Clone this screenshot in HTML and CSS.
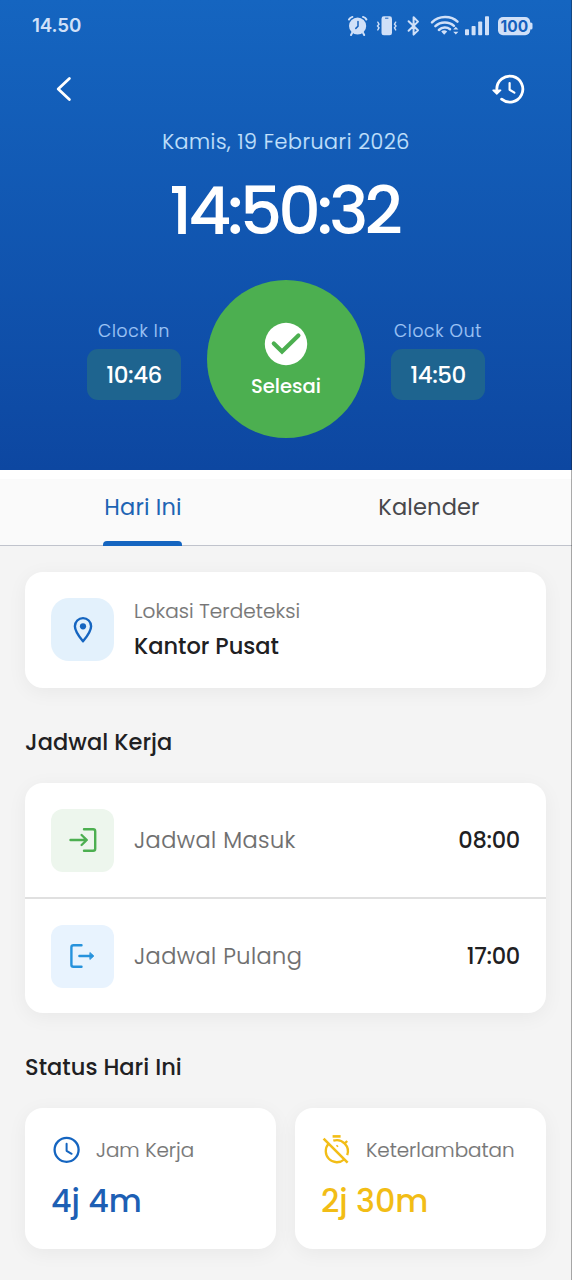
FILE: index.html
```html
<!DOCTYPE html>
<html lang="id">
<head>
<meta charset="utf-8">
<meta name="viewport" content="width=device-width, initial-scale=1">
<title>Absensi</title>
<link rel="stylesheet" href="styles.css">
</head>
<body>
<div class="screen">
  <header class="hero">
    <div class="statusbar">
      <span class="status-time">14.50</span>
      <svg class="status-icons" width="190" height="24" viewBox="0 0 190 24" fill="none" stroke="#d0e0f8" stroke-linecap="round">
        <g>
          <circle cx="12.6" cy="12" r="8.6" fill="#d0e0f8" stroke="none"/>
          <path d="M4 5.5Q5 3.6 7.4 2.9M18 2.9Q20.6 3.6 21.4 5.5M7.2 18.8L6 21M18 18.8L19.2 21" stroke-width="2"/>
          <path d="M13 7.5V12.2L10.8 14.4" stroke="#1560bd" stroke-width="1.5"/>
        </g>
        <rect x="36.5" y="2.3" width="10.5" height="19" rx="2.4" fill="#d0e0f8" stroke="none"/>
        <path d="M40.5 4.2h2.5" stroke="#1560bd" stroke-width="1"/>
        <path d="M32.8 8.2l1.2 1.9-1.5 1.9 1.5 1.9-1.2 2M50.7 8.2l-1.2 1.9L51 12l-1.5 1.9 1.2 2" stroke-width="1.4"/>
        <path d="M63.6 7.2L73 16.3L68.6 20.6V3.3L73 7.6L63.6 16.8" stroke-width="2" stroke-linejoin="round"/>
        <path d="M87 8.3C94 1.3 106 1.3 112.5 7.7M90.4 12.2C95.5 7.3 104 7.3 108.9 11.9M93.9 16C97.2 12.8 102 12.8 105 15.2" stroke-width="2.5"/>
        <path d="M96.2 17.6Q99.2 14.8 102.2 17.6L99.2 20.8Z" fill="#d0e0f8" stroke="none"/>
        <path d="M108.2 15.4L110.8 12.8L113.4 15.4ZM108.2 17.8H113.4L110.8 20.6Z" fill="#d0e0f8" stroke="none"/>
        <g fill="#d0e0f8" stroke="none">
          <rect x="120" y="15.3" width="4" height="6" rx=".8"/>
          <rect x="126.6" y="12" width="4" height="9.3" rx=".8"/>
          <rect x="133.2" y="7.4" width="4" height="13.9" rx=".8"/>
          <rect x="140" y="2.3" width="4" height="19" rx=".8"/>
          <rect x="153" y="3" width="32.2" height="18.2" rx="5"/>
          <rect x="184" y="8.5" width="3.5" height="7" rx="1.6"/>
          <text class="battery-text" x="169.3" y="17.7" text-anchor="middle">100</text>
        </g>
      </svg>
    </div>
    <nav class="topbar">
      <svg width="32" height="32" viewBox="0 0 32 32" fill="none" stroke="#fff" stroke-width="2.8" stroke-linecap="round" stroke-linejoin="round"><path d="M21.4 5.4L10.2 16L21.4 26.6"/></svg>
      <svg width="36" height="32" viewBox="0 0 36 32" fill="none" stroke="#fff" stroke-width="2.8" stroke-linecap="round" stroke-linejoin="round"><path d="M7.8 16A13 13 0 1 1 12.6 26.2"/><path d="M20.6 10V16.7L25.4 19.6" stroke-width="2.2"/><path d="M4 17.2H11.7L7.8 21Z" fill="#fff" stroke-width="1.4"/></svg>
    </nav>
    <div class="date">Kamis, 19 Februari 2026</div>
    <div class="clock">14:50:32</div>
    <div class="punch">
      <div class="punch-side">
        <span class="punch-label">Clock In</span>
        <span class="punch-time">10:46</span>
      </div>
      <div class="done">
        <svg width="44" height="44" viewBox="0 0 44 44" fill="none"><circle cx="22" cy="22" r="21.2" fill="#fff"/><path d="M9.8 21.5L18 29.5L34.4 13.4" stroke="#4caf50" stroke-width="4.2" stroke-linecap="round" stroke-linejoin="miter"/></svg>
        <span class="done-label">Selesai</span>
      </div>
      <div class="punch-side">
        <span class="punch-label">Clock Out</span>
        <span class="punch-time">14:50</span>
      </div>
    </div>
  </header>

  <nav class="tabs">
    <div class="tab active"><span class="tab-label">Hari Ini</span></div>
    <div class="tab"><span class="tab-label">Kalender</span></div>
  </nav>

  <main class="content">
    <section class="card location">
      <span class="tile tile-pin">
        <svg width="32" height="32" viewBox="0 0 32 32" fill="none" stroke="#1565c0" stroke-width="2.4"><path d="M16 27.3C13 23.7 7.9 17.3 7.9 12.2A8.1 8.1 0 0 1 24.1 12.2C24.1 17.3 19 23.7 16 27.3Z" stroke-linejoin="round"/><circle cx="16" cy="12.3" r="3.1" fill="#1565c0" stroke="none"/></svg>
      </span>
      <div class="location-text">
        <span class="location-label">Lokasi Terdeteksi</span>
        <span class="location-name">Kantor Pusat</span>
      </div>
    </section>

    <h2 class="heading">Jadwal Kerja</h2>
    <section class="card schedule">
      <div class="row">
        <span class="tile tile-in">
          <svg width="32" height="32" viewBox="0 0 32 32" fill="none" stroke="#4caf50" stroke-width="2.4" stroke-linecap="round" stroke-linejoin="round"><path d="M17 5.2H26.2Q28.2 5.2 28.2 7.2V24.8Q28.2 26.8 26.2 26.8H17M3.5 16H19.5M14.6 11L19.8 16L14.6 21"/></svg>
        </span>
        <span class="row-label">Jadwal Masuk</span>
        <span class="row-time">08:00</span>
      </div>
      <div class="row">
        <span class="tile tile-out">
          <svg width="32" height="32" viewBox="0 0 32 32" fill="none" stroke="#2692dc" stroke-width="2.4" stroke-linecap="round" stroke-linejoin="round"><path d="M14.5 5.2H6.4Q4.4 5.2 4.4 7.2V24.8Q4.4 26.8 6.4 26.8H14.5M12.4 16H24.5"/><path d="M23.2 12.8L26.8 16L23.2 19.2Z" fill="#2692dc" stroke-width="1"/></svg>
        </span>
        <span class="row-label">Jadwal Pulang</span>
        <span class="row-time">17:00</span>
      </div>
    </section>

    <h2 class="heading">Status Hari Ini</h2>
    <section class="stats">
      <article class="card stat">
        <div class="stat-head">
          <svg width="32" height="32" viewBox="0 0 32 32" fill="none" stroke="#1565c0" stroke-width="2.3" stroke-linecap="round" stroke-linejoin="round"><circle cx="15.6" cy="15.8" r="12"/><path d="M15.6 9.8V16.8L20.6 19.8" stroke-width="2"/></svg>
          <span class="stat-label">Jam Kerja</span>
        </div>
        <span class="stat-value blue">4j 4m</span>
      </article>
      <article class="card stat">
        <div class="stat-head">
          <svg width="32" height="32" viewBox="0 0 32 32" fill="none" stroke="#f2bd16" stroke-width="2.3"><path d="M11.6 2.4H19.6" stroke-width="2.6"/><path d="M7.5 9.7A11.2 11.2 0 0 0 23.3 25.5M12.3 6.7A11.2 11.2 0 0 1 26.2 21.2M23.8 9.4L26.2 7"/><path d="M2.6 4.6L26.6 28.6" stroke-width="2.5"/><path d="M15.5 11.2l1.5 1.5" stroke-width="1.6"/></svg>
          <span class="stat-label">Keterlambatan</span>
        </div>
        <span class="stat-value yellow">2j 30m</span>
      </article>
    </section>
  </main>
  <div class="edge"></div>
</div>
</body>
</html>
```
FILE: styles.css
```css
* { box-sizing: border-box; }
body {
  margin: 0;
  font-family: Poppins, Inter, "Open Sans", sans-serif;
  color: #202022;
}
svg { display: block; flex: none; }
.screen { position: relative; width: 572px; height: 1280px; overflow: hidden; background: #f4f4f4; }
.edge { position: absolute; top: 0; right: 0; width: 1px; height: 100%; background: rgba(20, 20, 20, .35); }

.clock, .punch-time, .done-label, .location-name, .heading, .row-time, .stat-value {
  font-weight: 500;
}
/* Secondary text */
.date, .punch-label, .location-label, .row-label, .stat-label {
  font-weight: 300;
  -webkit-text-stroke: .2px currentColor;
}

.hero { height: 470px; background: linear-gradient(180deg, #1565c0, #0d47a1); color: #fff; }
.statusbar { display: flex; justify-content: space-between; align-items: center; height: 52px; padding: 0 37px 0 32px; }
.status-time { font-family: Inter, sans-serif; font-size: 18.8px; font-weight: 600; color: #d0e0f8; letter-spacing: -.1px; line-height: 24px; }
.battery-text { font-family: Inter, sans-serif; font-size: 15.5px; font-weight: 700; fill: #1560bd; }
.topbar { display: flex; justify-content: space-between; align-items: center; height: 74px; padding: 0 47px 0 48px; }
.date { height: 32px; line-height: 32px; text-align: center; font-size: 20.6px; letter-spacing: .6px; color: #c4e1fc; }
.clock { height: 104px; line-height: 106px; text-align: center; text-indent: -4px; font-size: 66.5px; letter-spacing: -4px; }
.punch { display: flex; justify-content: center; gap: 26px; height: 158px; margin-top: 18px; }
.punch-side { display: flex; flex-direction: column; align-items: center; width: 94px; padding-top: 38px; }
.punch-label { line-height: 26px; font-size: 17px; letter-spacing: .75px; color: #a0c6f6; white-space: nowrap; }
.punch-time { display: flex; align-items: center; justify-content: center; width: 94px; height: 51px; margin-top: 5px; border-radius: 11px; background: #1e648f; font-size: 23px; letter-spacing: -.5px; }
.done { display: flex; flex-direction: column; align-items: center; width: 158px; height: 158px; padding-top: 42px; border-radius: 50%; background: #4caf50; }
.done-label { margin-top: 6px; line-height: 28px; font-size: 19.6px; }

.tabs { display: flex; height: 76px; background: linear-gradient(#fff 0 9px, #fafafa 9px); border-bottom: 1px solid #c0c3cc; }
.tab { flex: 1; display: flex; justify-content: center; height: 76px; font-size: 22.5px; letter-spacing: .15px; color: #48484c; }
.tab-label { position: relative; height: 76px; line-height: 74px; }
.active { color: #1d64b4; }
.active .tab-label::after { content: ""; position: absolute; left: -1px; right: 0; bottom: 0; height: 5px; border-radius: 4px 4px 0 0; background: #1565c0; }

.content { padding: 26px 26px 0 25px; }
.card { border-radius: 18px; background: #fff; box-shadow: 0 4px 20px rgba(0, 0, 0, .05); }
.tile { display: flex; align-items: center; justify-content: center; flex: none; width: 63px; height: 63px; border-radius: 12px; }
.tile-pin { border-radius: 18px; background: #e3f1fc; }
.tile-in { background: #edf6ed; }
.tile-out { background: #e8f3fe; }
.location { display: flex; align-items: center; gap: 20px; height: 116px; padding: 0 26px 1px; }
.location-text { display: flex; flex-direction: column; padding-top: 1px; }
.location-label { line-height: 32px; font-size: 20px; letter-spacing: .1px; color: #757575; }
.location-name { line-height: 39px; font-size: 22.5px; }
.heading { margin: 37px 0 0; font-size: 22.5px; letter-spacing: .05px; line-height: 34px; }
.schedule { margin-top: 24px; height: 230px; }
.row { display: flex; align-items: center; gap: 20px; height: 114px; padding: 0 26px; }
.row + .row { height: 116px; border-top: 2px solid #e0e0e0; }
.row-label { flex: 1; font-size: 22.4px; letter-spacing: .45px; color: #6c6c6c; }
.row-time { font-size: 22.5px; letter-spacing: -.3px; }
.stats { display: grid; grid-template-columns: 1fr 1fr; gap: 19px; margin-top: 24px; }
.stat { height: 141px; padding: 26px 0 0 26px; }
.stat-head { display: flex; align-items: center; gap: 13px; height: 32px; }
.stat-label { font-size: 19.9px; color: #757575; }
.stat-value { display: block; margin-top: 12px; line-height: 46px; font-size: 31.8px; }
.blue { color: #1d5fb4; }
.yellow { color: #f2bd16; }
```
